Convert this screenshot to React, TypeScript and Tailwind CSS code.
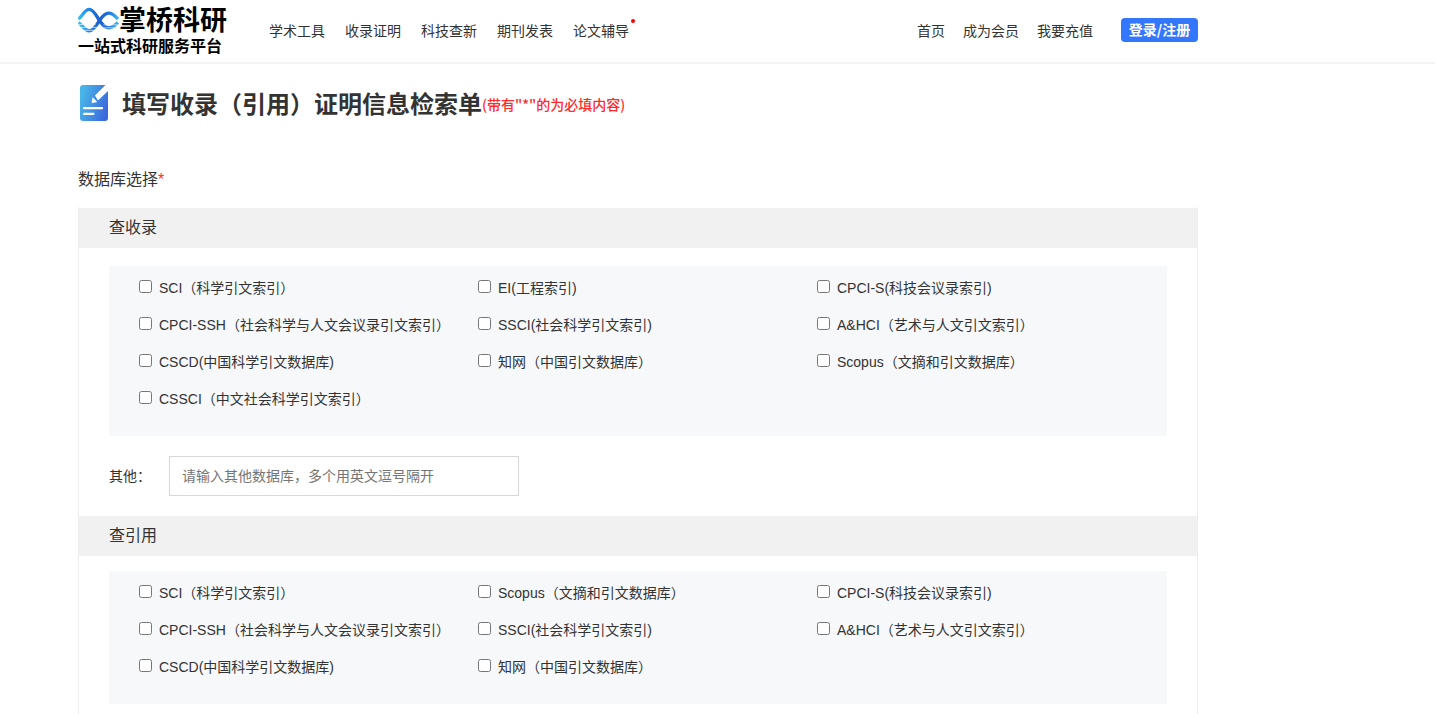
import React, { useId } from "react";

const navLinks = ["学术工具", "收录证明", "科技查新", "期刊发表", "论文辅导"];
const userLinks = ["首页", "成为会员", "我要充值"];

const indexed = [
  "SCI（科学引文索引）",
  "EI(工程索引)",
  "CPCI-S(科技会议录索引)",
  "CPCI-SSH（社会科学与人文会议录引文索引）",
  "SSCI(社会科学引文索引)",
  "A&HCI（艺术与人文引文索引）",
  "CSCD(中国科学引文数据库)",
  "知网（中国引文数据库）",
  "Scopus（文摘和引文数据库）",
  "CSSCI（中文社会科学引文索引）",
];

const cited = [
  "SCI（科学引文索引）",
  "Scopus（文摘和引文数据库）",
  "CPCI-S(科技会议录索引)",
  "CPCI-SSH（社会科学与人文会议录引文索引）",
  "SSCI(社会科学引文索引)",
  "A&HCI（艺术与人文引文索引）",
  "CSCD(中国科学引文数据库)",
  "知网（中国引文数据库）",
];

function WaveMark() {
  return (
    <svg viewBox="0 0 42 30" className="h-[30px] w-[42px]" fill="none" aria-hidden="true">
      <defs>
        <linearGradient id="wave" x1="0" y1="0" x2="42" y2="0" gradientUnits="userSpaceOnUse">
          <stop offset="0" stopColor="#3cc4f5" />
          <stop offset="0.2" stopColor="#2590ec" />
          <stop offset="0.5" stopColor="#1a5fd0" />
          <stop offset="0.75" stopColor="#1f72dc" />
          <stop offset="1" stopColor="#3cc0f2" />
        </linearGradient>
      </defs>
      <g stroke="url(#wave)" strokeWidth="3.400">
        <path d="M0.500 13C5 9 7 3 11.500 3C16 3 19 10 22 14.500C25 19 27.500 22 31.500 22C35.500 22 37.500 20 41 16.500" />
        <path d="M0.500 16.500C5 20 7 25 11.500 25C16 25 19 19 22 14.500C25 10 27.500 7 31.500 7C35.500 7 37.500 9.500 41 13" />
      </g>
      <path d="M0 18.500H18M0 21.500H20M0 24.500H42M26 19H42M26 22H42" stroke="#fff" strokeWidth="0.700" />
    </svg>
  );
}

function FormIcon() {
  return (
    <svg viewBox="0 0 28 36" className="mb-[2px] h-9 w-7 shrink-0" fill="none" aria-hidden="true">
      <defs>
        <linearGradient id="form" x1="0" y1="14" x2="28" y2="22" gradientUnits="userSpaceOnUse">
          <stop offset="0" stopColor="#48b6e9" />
          <stop offset="1" stopColor="#3c68dc" />
        </linearGradient>
      </defs>
      <rect width="28" height="36" rx="3" fill="url(#form)" />
      <path d="M25.500 0 15 10.500 18 15.500 28 6V0Z" fill="#fff" />
      <path d="M12.700 12.800 12 17.800 16.800 16.800Z" fill="#fff" stroke="#fff" strokeWidth="0.600" />
      <path d="M4 23.200H22M4 28.800H13.500" stroke="#fff" strokeWidth="2.200" strokeLinecap="round" />
    </svg>
  );
}

function SectionBar({ children }: { children: React.ReactNode }) {
  return <h2 className="h-10 bg-[#f1f1f1] px-[30px] text-base leading-10 text-[#333]">{children}</h2>;
}

function Choices({ items, name }: { items: string[]; name: string }) {
  const id = useId();
  return (
    <div className="grid grid-cols-3 bg-[#f7f8fa] pt-[3px] pr-[11px] pb-[19px] pl-[30px]">
      {items.map((item, i) => (
        <div key={item} className="flex h-[37px] items-center gap-[7px]">
          <input id={`${id}-${i}`} name={name} value={item} type="checkbox" className="mb-[2px] size-[13px] shrink-0" />
          <label htmlFor={`${id}-${i}`} className="whitespace-nowrap">
            {item}
          </label>
        </div>
      ))}
    </div>
  );
}

export default function App() {
  return (
    <div className="flex min-h-screen flex-col bg-white font-['Liberation_Sans','Noto_Sans_CJK_SC',sans-serif] text-sm text-[#333]">
      <header className="border-b-2 border-[#f3f3f3] px-[78px]">
        <div className="flex h-[62px] max-w-[1120px] items-center">
          <a href="#" className="flex w-[149px] shrink-0 flex-col text-black">
            <span className="flex h-[31px] items-center">
              <WaveMark />
              <span className="text-[27px] leading-[31px] font-bold whitespace-nowrap">掌桥科研</span>
            </span>
            <span className="text-base leading-5 font-bold whitespace-nowrap">一站式科研服务平台</span>
          </a>
          <nav className="ml-[42px] flex gap-5">
            {navLinks.map((text, i) => (
              <a key={text} href="#" className="relative whitespace-nowrap">
                {text}
                {i === navLinks.length - 1 && (
                  <span className="absolute -top-[2px] -right-[6px] size-1 rounded-full bg-[#f00]" />
                )}
              </a>
            ))}
          </nav>
          <nav className="ml-auto flex items-center gap-[18px]">
            {userLinks.map((text) => (
              <a key={text} href="#" className="whitespace-nowrap">
                {text}
              </a>
            ))}
          </nav>
          <button
            type="button"
            className="mb-[2px] ml-7 flex h-6 w-[77px] items-center justify-center rounded-sm bg-[#3377ff] pb-[2px] font-['Noto_Sans_CJK_SC',sans-serif] font-bold whitespace-nowrap text-white"
          >
            登录/注册
          </button>
        </div>
      </header>

      <main className="flex grow flex-col px-[78px]">
        <div className="flex max-w-[1120px] grow flex-col">
          <div className="mt-5 flex h-10 items-center pl-[2px]">
            <FormIcon />
            <h1 className="ml-[14px] pt-[2px] text-2xl font-bold whitespace-nowrap">填写收录（引用）证明信息检索单</h1>
            <span className="font-['Noto_Sans_CJK_SC',sans-serif] font-medium whitespace-nowrap text-[#ff2b2b]">
              (带有"*"的为必填内容)
            </span>
          </div>

          <form className="mt-10 flex grow flex-col">
            <p className="text-base leading-8">
              数据库选择<span className="text-[#ff2b2b]">*</span>
            </p>
            <div className="mt-[11px] grow border-x border-[#eee] pt-px">
              <SectionBar>查收录</SectionBar>
              <div className="px-[30px] pt-[18px] pb-5">
                <Choices items={indexed} name="indexed" />
                <div className="mt-5 flex items-center">
                  <label htmlFor="other" className="w-[60px]">
                    其他：
                  </label>
                  <input
                    id="other"
                    type="text"
                    placeholder="请输入其他数据库，多个用英文逗号隔开"
                    className="h-10 w-[350px] border border-[#d9d9d9] px-3 placeholder:text-[#757575]"
                  />
                </div>
              </div>
              <SectionBar>查引用</SectionBar>
              <div className="px-[30px] pt-[15px]">
                <Choices items={cited} name="cited" />
              </div>
            </div>
          </form>
        </div>
      </main>
    </div>
  );
}
